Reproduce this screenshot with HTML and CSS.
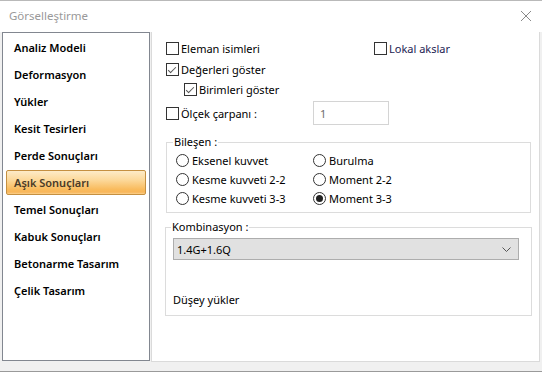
FILE: index.html
```html
<!DOCTYPE html>
<html lang="tr">

<head>
    <meta charset="UTF-8">
    <meta name="viewport" content="width=device-width, initial-scale=1.0">
    <title>Görselleştirme</title>
    <link rel="stylesheet" href="styles.css">
</head>

<body>
    <div class="dialog">
        <div class="titlebar">
            <span class="title">Görselleştirme</span>
            <svg class="close" width="12" height="12" viewBox="0 0 12 12">
                <path d="M1 1 L11 11 M11 1 L1 11" stroke="#8a8a8a" stroke-width="1" fill="none" />
            </svg>
        </div>

        <div class="main">
            <ul class="menu">
                <li>Analiz Modeli</li>
                <li>Deformasyon</li>
                <li>Yükler</li>
                <li>Kesit Tesirleri</li>
                <li>Perde Sonuçları</li>
                <li class="active">Aşık Sonuçları</li>
                <li>Temel Sonuçları</li>
                <li>Kabuk Sonuçları</li>
                <li>Betonarme Tasarım</li>
                <li>Çelik Tasarım</li>
            </ul>

            <div class="panel">
                <div class="row top-row">
                    <label class="check"><span class="box"></span>Eleman isimleri</label>
                    <label class="check"><span class="box"></span><span class="blue">Lokal akslar</span></label>
                </div>
                <div class="row">
                    <label class="check"><span class="box checked"></span>Değerleri göster</label>
                </div>
                <div class="row sub">
                    <label class="check"><span class="box checked"></span>Birimleri göster</label>
                </div>
                <div class="row scale-row">
                    <label class="check"><span class="box"></span>Ölçek çarpanı :</label>
                    <div class="num">1</div>
                </div>

                <fieldset class="group bilesen">
                    <legend>Bileşen :</legend>
                    <div class="radios">
                        <label class="radio"><span class="dot"></span>Eksenel kuvvet</label>
                        <label class="radio"><span class="dot"></span>Burulma</label>
                        <label class="radio"><span class="dot"></span>Kesme kuvveti 2-2</label>
                        <label class="radio"><span class="dot"></span>Moment 2-2</label>
                        <label class="radio"><span class="dot"></span>Kesme kuvveti 3-3</label>
                        <label class="radio"><span class="dot on"></span>Moment 3-3</label>
                    </div>
                </fieldset>

                <fieldset class="group kombinasyon">
                    <legend>Kombinasyon :</legend>
                    <div class="combo">
                        <span>1.4G+1.6Q</span>
                        <svg width="9" height="5" viewBox="0 0 9 5">
                            <path d="M0.5 0.5 L4.5 4.5 L8.5 0.5" stroke="#555" stroke-width="1" fill="none" />
                        </svg>
                    </div>
                    <div class="desc">Düşey yükler</div>
                </fieldset>
            </div>
        </div>

        <div class="bottom"></div>
    </div>
</body>

</html>
```

FILE: styles.css
```css
* {
    box-sizing: border-box;
}

body {
    margin: 0;
    background: #fff;
    font-family: "Noto Sans", "Open Sans", sans-serif;
    font-size: 11px;
    color: #000;
}

.dialog {
    width: 542px;
    height: 372px;
    background: #f0f0f0;
    border-top: 1px solid #b9b9b9;
    border-bottom: 1px solid #9a9a9a;
    display: flex;
    flex-direction: column;
}

/* Title bar */
.titlebar {
    height: 31px;
    background: #fff;
    display: flex;
    align-items: center;
    justify-content: space-between;
    padding: 0 10px 2px 9px;
}

.title {
    color: #999;
    font-size: 11.5px;
}

.close {
    margin-top: 1px;
}

/* Body */
.main {
    display: flex;
    height: 330px;
    padding-left: 2px;
}

.menu {
    list-style: none;
    margin: 0;
    padding: 2px 3px 0;
    width: 148px;
    height: 329px;
    background: #fff;
    border: 1px solid #828790;
}

.menu li {
    height: 25px;
    margin-bottom: 2px;
    padding-left: 7px;
    line-height: 23px;
    font-weight: 600;
    font-size: 11px;
    border: 1px solid transparent;
    border-radius: 2px;
}

.menu li.active {
    color: #4a3b28;
    border-color: #c59041;
    background: linear-gradient(#fdebc8, #fcd899 40%, #f9bb5d 80%, #f8b65a 92%, #fbd08c);
}

.panel {
    width: 389px;
    height: 330px;
    margin-left: 1px;
    background: #fff;
    border: 1px solid #dadada;
    border-top: none;
    padding: 6px 0 0 14px;
}

.row {
    display: flex;
    align-items: center;
    height: 20px;
}

.top-row {
    display: grid;
    grid-template-columns: 208px auto;
    align-items: center;
}

.row + .row {
    margin-top: 1px;
}

.row.sub {
    height: 19px;
    padding-left: 18px;
}

.scale-row {
    display: grid;
    grid-template-columns: 147px auto;
    height: 24px;
}

.row.scale-row {
    margin-top: 2px;
}

.check,
.radio {
    display: flex;
    align-items: center;
    white-space: nowrap;
}

.box {
    width: 13px;
    height: 13px;
    border: 1px solid #333;
    background: #fff;
    margin-right: 2px;
    position: relative;
}

.box.checked::after {
    content: "";
    position: absolute;
    left: 3px;
    top: 1px;
    width: 3px;
    height: 7px;
    border-right: 1px solid #555;
    border-bottom: 1px solid #555;
    transform: rotate(45deg);
}

.blue {
    color: #1c1c52;
}

.num {
    width: 76px;
    height: 24px;
    border: 1px solid #d4d4d4;
    color: #6d6d6d;
    padding: 4px 6px;
}

/* Group boxes */
.group {
    margin: 0;
    border: 1px solid #dcdcdc;
}

.group legend {
    padding: 0 1px;
    line-height: 16px;
}

.bilesen {
    width: 365px;
    margin-top: 9px;
    padding: 1px 0 4px 6px;
}

.radios {
    display: grid;
    grid-template-columns: 137px auto;
    margin-left: 3px;
}

.radio {
    height: 19px;
}

.dot {
    width: 13px;
    height: 13px;
    border: 1px solid #333;
    border-radius: 50%;
    margin-right: 3px;
    display: flex;
    align-items: center;
    justify-content: center;
}

.dot.on::after {
    content: "";
    width: 7px;
    height: 7px;
    border-radius: 50%;
    background: #222;
}

.kombinasyon {
    width: 367px;
    margin: 6px 0 0 -1px;
    padding: 3px 0 7px 5px;
}

.combo {
    width: 346px;
    height: 22px;
    margin-left: 2px;
    background: #e1e1e1;
    border: 1px solid #adadad;
    display: flex;
    align-items: center;
    justify-content: space-between;
    padding: 0 7px 0 3px;
}

.desc {
    margin: 32px 0 0 2px;
    line-height: 16px;
}

.bottom {
    flex: 1;
}
```
